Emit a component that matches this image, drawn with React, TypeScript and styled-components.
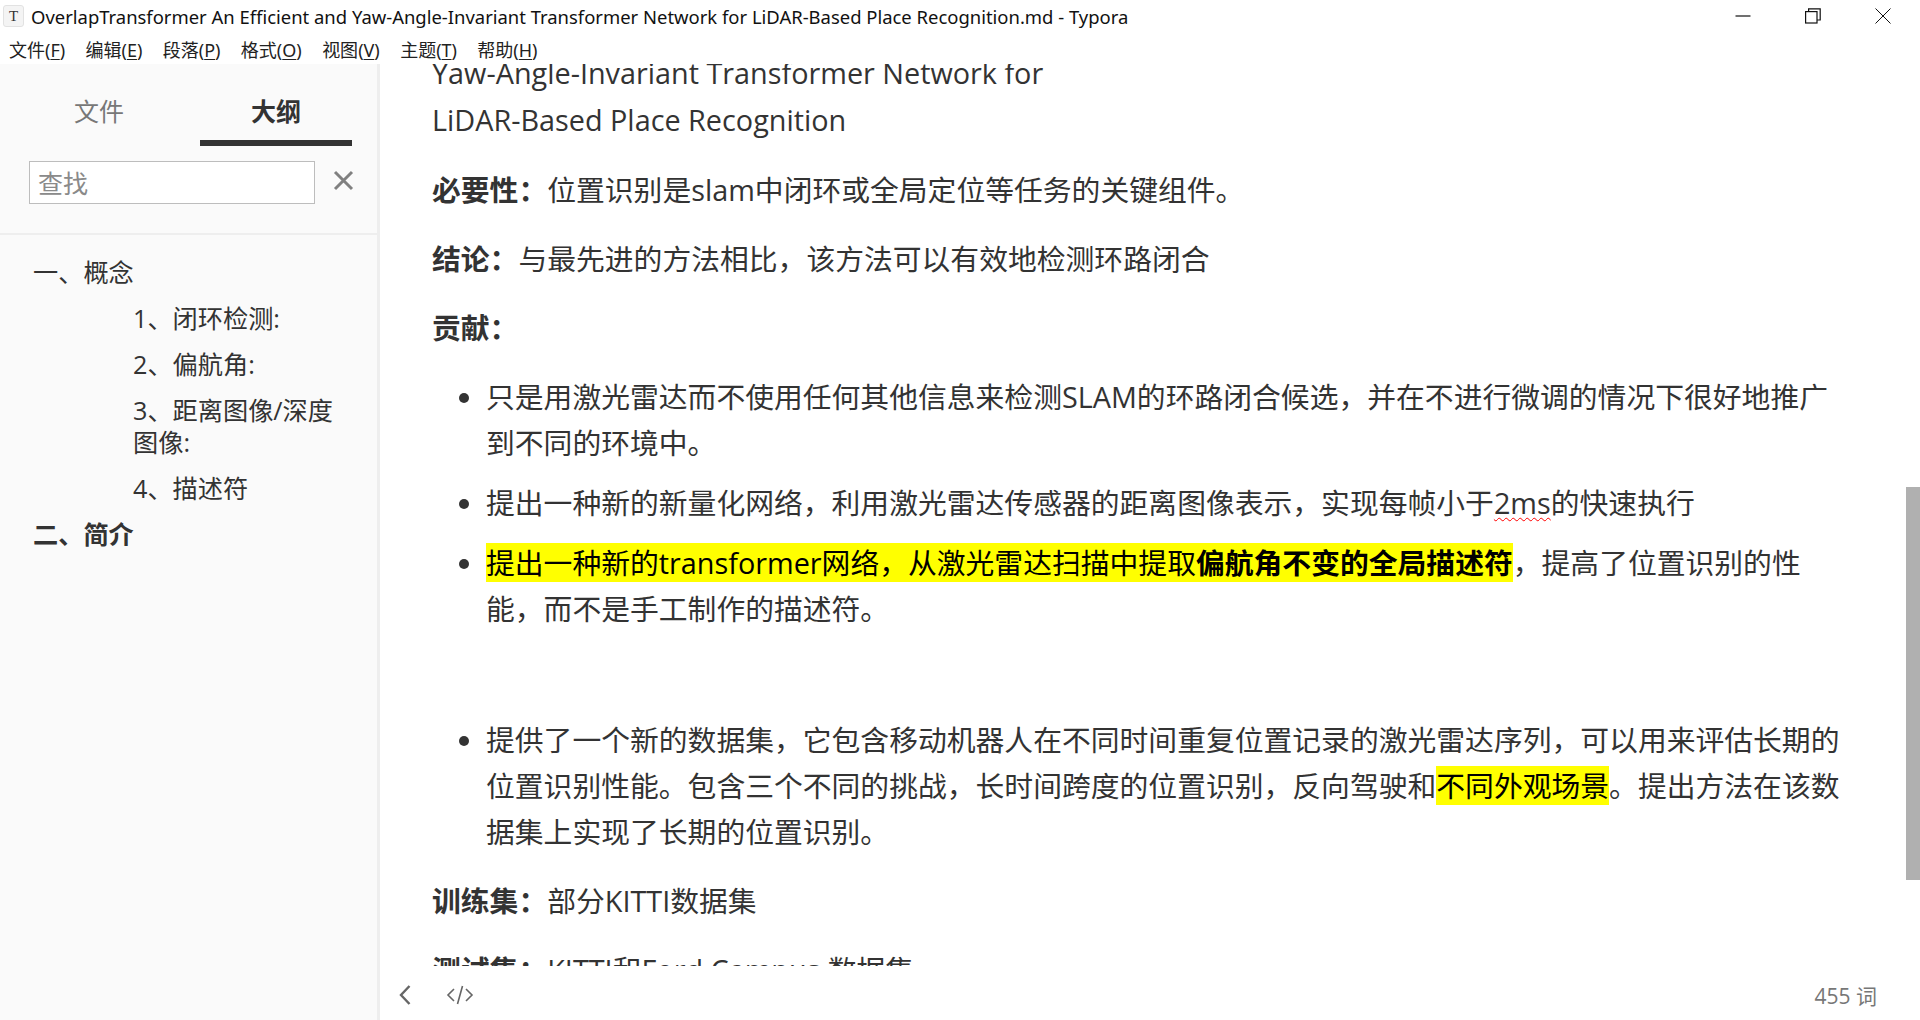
import React from "react";
import styled, { createGlobalStyle } from "styled-components";

const sans = `"Open Sans", "Noto Sans CJK SC", sans-serif`;
const ui = `"Noto Sans", "Noto Sans CJK SC", sans-serif`;

const Global = createGlobalStyle`
  html, body { margin: 0; padding: 0; overflow: hidden; background: #fff; }
  * { box-sizing: border-box; }
`;
const Shell = styled.div`
  position: relative; width: 1920px; height: 1020px; display: flex; flex-direction: column;
  overflow: hidden; background: #fff; font-family: ${sans}; color: #333;
`;
const TitleBar = styled.div`
  height: 32px; flex: none; display: flex; align-items: center; padding-left: 3px; color: #000;
`;
const AppIcon = styled.div`
  width: 21px; height: 22px; border-radius: 3px; background: #f4f4f4; border: 1px solid #e2e2e2; margin-right: 7px;
  display: flex; align-items: center; justify-content: center;
  font: 15px/1 "Liberation Serif", serif; color: #333;
`;
const TitleText = styled.div`
  font: 18.45px/34px ${ui}; white-space: nowrap; color: #111; height: 32px;
`;
const WindowButtons = styled.div`
  margin-left: auto; display: flex; align-items: center; gap: 54px; padding-right: 29px;
  svg { display: block; }
`;
const MenuBar = styled.div`
  height: 32px; flex: none; display: flex; align-items: center; gap: 20.4px; padding: 4px 0 0 9px;
  font: 18px/28px ${ui}; color: #222; white-space: nowrap;
`;
const MenuItem = styled.span`
  u { text-underline-offset: 2px; }
`;
const Body = styled.div`
  flex: 1; min-height: 0; display: flex;
`;
const Sidebar = styled.aside`
  width: 380px; flex: none; background: #fafafa; border-right: 3px solid #eeeeee; display: flex; flex-direction: column;
`;
const Tabs = styled.div`
  height: 82px; flex: none; display: flex; gap: 25px; padding-left: 23px;
`;
const Tab = styled.div<{ $active?: boolean }>`
  width: 152px; height: 82px; text-align: center; padding-top: 29px;
  font-size: 25px; line-height: 36px; font-weight: ${(p) => (p.$active ? 700 : 400)};
  color: ${(p) => (p.$active ? "#333" : "#777")};
  border-bottom: 6px solid ${(p) => (p.$active ? "#333" : "transparent")};
`;
const SearchRow = styled.div`
  height: 89px; flex: none; display: flex; align-items: flex-start; padding: 15px 0 0 29px; border-bottom: 2px solid #eeeeee;
`;
const SearchBox = styled.div`
  width: 286px; height: 43px; background: #fff; border: 1px solid #bdbdbd; padding-left: 8px;
  font-size: 25px; line-height: 43px; color: #8a8a8a;
`;
const ClearButton = styled.div`
  margin: 9px 0 0 18px; svg { display: block; }
`;
const Outline = styled.nav`
  padding: 14px 30px 0 33px; font-size: 25.2px; color: #333;
`;
const OutlineItem = styled.div<{ $sub?: boolean; $bold?: boolean }>`
  padding: 7px 0 7px ${(p) => (p.$sub ? "100px" : "0")};
  line-height: 32px; font-weight: ${(p) => (p.$bold ? 700 : 400)};
`;
const Editor = styled.main`
  flex: 1; min-width: 0; display: flex; flex-direction: column;
`;
const Scroller = styled.div`
  height: 902px; flex: none; overflow: hidden; padding: 0 71px 0 52px;
  font-size: 28.8px; line-height: 46px; color: #333;
`;
const HeadingTail = styled.div`
  margin-top: -14px; margin-bottom: 24px;
  & > span { display: block; }
  & > span + span { margin-top: 1px; }
`;
const Para = styled.p`
  margin: 0 0 23px;
`;
const Bullets = styled.ul`
  margin: 0 0 23px; padding: 0 0 0 54px;
`;
const Bullet = styled.li<{ $gap?: boolean }>`
  margin-top: ${(p) => (p.$gap ? "85px" : "14px")};
  &:first-child { margin-top: 0; }
`;
const Mark = styled.mark`
  background: #ffff00; color: #000;
`;
const Squiggle = styled.span`
  text-decoration: underline wavy #f00 1px; text-underline-offset: 3px;
`;
const StatusBar = styled.footer`
  height: 54px; flex: none; display: flex; align-items: center; padding: 4px 43px 0 18px; color: #666;
  svg { display: block; }
`;
const CodeToggle = styled.div`
  margin-left: 34px;
`;
const WordCount = styled.div`
  margin-left: auto; font-size: 21px; color: #777;
`;
const ScrollThumb = styled.div`
  position: absolute; right: 0; top: 487px; width: 14px; height: 393px; background: #b0b0b0;
`;

const menus: [string, string][] = [
  ["文件", "F"], ["编辑", "E"], ["段落", "P"], ["格式", "O"], ["视图", "V"], ["主题", "T"], ["帮助", "H"],
];

export default function App() {
  return (
    <Shell>
      <Global />
      <TitleBar>
        <AppIcon>T</AppIcon>
        <TitleText>OverlapTransformer An Efficient and Yaw-Angle-Invariant Transformer Network for LiDAR-Based Place Recognition.md - Typora</TitleText>
        <WindowButtons>
          <svg width="16" height="16" viewBox="0 0 16 16"><path d="M0.5 8h15" stroke="#111" strokeWidth="1.2" fill="none" /></svg>
          <svg width="16" height="16" viewBox="0 0 16 16" fill="none" stroke="#111" strokeWidth="1.2"><rect x="0.6" y="3.6" width="11.4" height="11.4" /><path d="M3.6 3.6V0.8H15.2V12H12" /></svg>
          <svg width="16" height="16" viewBox="0 0 16 16"><path d="M0.5 0.5L15.5 15.5M15.5 0.5L0.5 15.5" stroke="#111" strokeWidth="1" fill="none" /></svg>
        </WindowButtons>
      </TitleBar>
      <MenuBar>
        {menus.map(([label, key]) => (
          <MenuItem key={key}>{label}(<u>{key}</u>)</MenuItem>
        ))}
      </MenuBar>
      <Body>
        <Sidebar>
          <Tabs>
            <Tab>文件</Tab>
            <Tab $active>大纲</Tab>
          </Tabs>
          <SearchRow>
            <SearchBox>查找</SearchBox>
            <ClearButton>
              <svg width="21" height="21" viewBox="0 0 21 21"><path d="M2 2L19 19M19 2L2 19" stroke="#808080" strokeWidth="3" fill="none" /></svg>
            </ClearButton>
          </SearchRow>
          <Outline>
            <OutlineItem>一、概念</OutlineItem>
            <OutlineItem $sub>1、闭环检测:</OutlineItem>
            <OutlineItem $sub>2、偏航角:</OutlineItem>
            <OutlineItem $sub>3、距离图像/深度图像:</OutlineItem>
            <OutlineItem $sub>4、描述符</OutlineItem>
            <OutlineItem $bold>二、简介</OutlineItem>
          </Outline>
        </Sidebar>
        <Editor>
          <Scroller>
            <HeadingTail>
              <span>Yaw-Angle-Invariant Transformer Network for</span>
              <span>LiDAR-Based Place Recognition</span>
            </HeadingTail>
            <Para><strong>必要性：</strong>位置识别是slam中闭环或全局定位等任务的关键组件。</Para>
            <Para><strong>结论：</strong>与最先进的方法相比，该方法可以有效地检测环路闭合</Para>
            <Para><strong>贡献：</strong></Para>
            <Bullets>
              <Bullet>只是用激光雷达而不使用任何其他信息来检测SLAM的环路闭合候选，并在不进行微调的情况下很好地推广到不同的环境中。</Bullet>
              <Bullet>提出一种新的新量化网络，利用激光雷达传感器的距离图像表示，实现每帧小于<Squiggle>2ms</Squiggle>的快速执行</Bullet>
              <Bullet><Mark>提出一种新的transformer网络，从激光雷达扫描中提取<strong>偏航角不变的全局描述符</strong></Mark>，提高了位置识别的性能，而不是手工制作的描述符。</Bullet>
              <Bullet $gap>提供了一个新的数据集，它包含移动机器人在不同时间重复位置记录的激光雷达序列，可以用来评估长期的位置识别性能。包含三个不同的挑战，长时间跨度的位置识别，反向驾驶和<Mark>不同外观场景</Mark>。提出方法在该数据集上实现了长期的位置识别。</Bullet>
            </Bullets>
            <Para><strong>训练集：</strong>部分KITTI数据集</Para>
            <Para><strong>测试集：</strong>KITTI和Ford Campus 数据集</Para>
          </Scroller>
          <StatusBar>
            <svg width="14" height="22" viewBox="0 0 14 22"><path d="M11.5 2L3 11l8.5 9" stroke="#666" strokeWidth="2.4" fill="none" /></svg>
            <CodeToggle>
              <svg width="28" height="22" viewBox="0 0 28 22" fill="none" stroke="#666" strokeWidth="1.6"><path d="M8 5L2 11l6 6M20 5l6 6-6 6M16.5 2l-5 18" /></svg>
            </CodeToggle>
            <WordCount>455 词</WordCount>
          </StatusBar>
        </Editor>
      </Body>
      <ScrollThumb />
    </Shell>
  );
}
